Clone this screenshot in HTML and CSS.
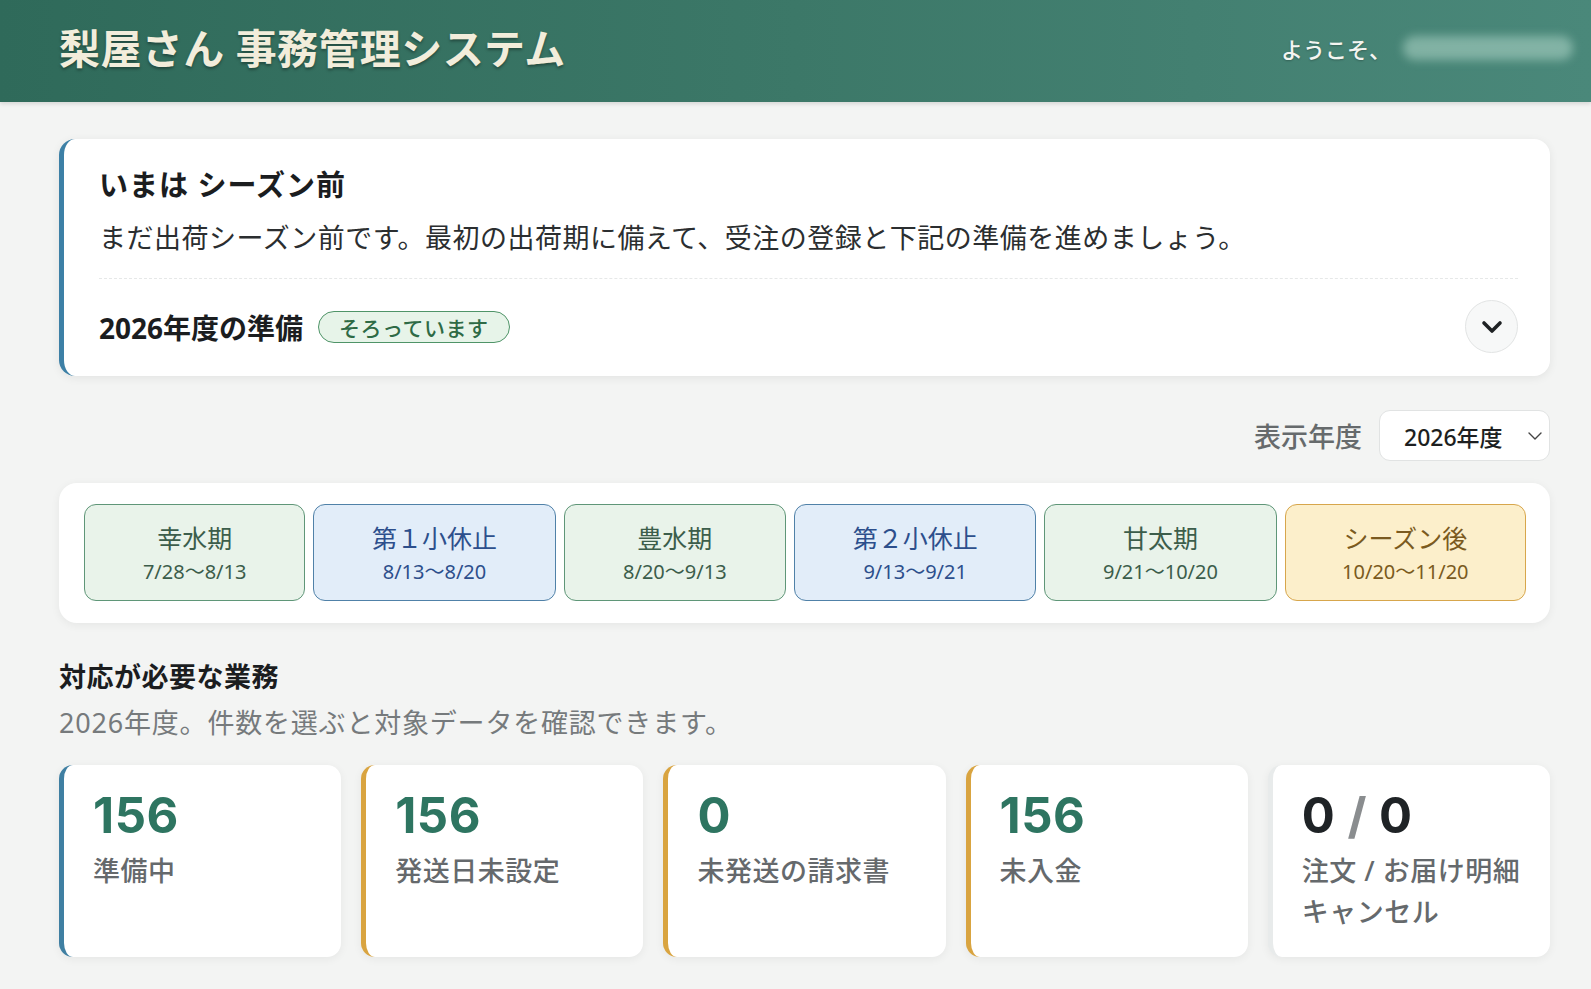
FILE: index.html
```html
<!DOCTYPE html>
<html lang="ja">
<head>
<meta charset="utf-8">
<title>梨屋さん 事務管理システム</title>
<link rel="stylesheet" href="styles.css">
</head>
<body>
<header class="topbar">
  <h1 class="brand">梨屋さん 事務管理システム</h1>
  <div class="welcome">ようこそ、<span class="user-blur"></span></div>
</header>
<main class="page">
  <section class="status-card">
    <h2 class="status-title">いまは シーズン前</h2>
    <p class="status-desc">まだ出荷シーズン前です。最初の出荷期に備えて、受注の登録と下記の準備を進めましょう。</p>
    <div class="status-row">
      <div class="prep">
        <span class="prep-title">2026年度の準備</span>
        <span class="badge">そろっています</span>
      </div>
      <button class="toggle" aria-label="開く">
        <svg width="22" height="14" viewBox="0 0 22 14"><path d="M3 3 L11 11 L19 3" fill="none" stroke="#1f2224" stroke-width="3.6" stroke-linecap="round" stroke-linejoin="round"/></svg>
      </button>
    </div>
  </section>

  <div class="year-picker">
    <span class="year-label">表示年度</span>
    <div class="select">
      <span>2026年度</span>
      <svg width="16" height="10" viewBox="0 0 16 10"><path d="M2 2 L8 8 L14 2" fill="none" stroke="#444" stroke-width="1.4" stroke-linecap="round" stroke-linejoin="round"/></svg>
    </div>
  </div>

  <section class="period-card">
    <div class="chips">
      <div class="chip green"><span class="chip-name">幸水期</span><span class="chip-date">7/28〜8/13</span></div>
      <div class="chip blue"><span class="chip-name">第１小休止</span><span class="chip-date">8/13〜8/20</span></div>
      <div class="chip green"><span class="chip-name">豊水期</span><span class="chip-date">8/20〜9/13</span></div>
      <div class="chip blue"><span class="chip-name">第２小休止</span><span class="chip-date">9/13〜9/21</span></div>
      <div class="chip green"><span class="chip-name">甘太期</span><span class="chip-date">9/21〜10/20</span></div>
      <div class="chip yellow"><span class="chip-name">シーズン後</span><span class="chip-date">10/20〜11/20</span></div>
    </div>
  </section>

  <section class="tasks">
    <h2 class="tasks-title">対応が必要な業務</h2>
    <p class="tasks-sub">2026年度。件数を選ぶと対象データを確認できます。</p>
    <div class="stats">
      <div class="stat stat-blue"><div class="stat-num">156</div><div class="stat-label">準備中</div></div>
      <div class="stat stat-gold"><div class="stat-num">156</div><div class="stat-label">発送日未設定</div></div>
      <div class="stat stat-gold"><div class="stat-num">0</div><div class="stat-label">未発送の請求書</div></div>
      <div class="stat stat-gold"><div class="stat-num">156</div><div class="stat-label">未入金</div></div>
      <div class="stat stat-plain"><div class="stat-num dark">0<span class="slash"> / </span>0</div><div class="stat-label">注文 / お届け明細<br>キャンセル</div></div>
    </div>
  </section>
</main>
</body>
</html>
```

FILE: styles.css
```css
* { box-sizing: border-box; }

html, body {
  margin: 0;
  padding: 0;
}

body {
  background: #f3f4f3;
  font-family: "Noto Sans", "Noto Sans CJK JP", sans-serif;
  color: #1d1f21;
}

.topbar {
  height: 102px;
  display: flex;
  align-items: center;
  justify-content: space-between;
  padding: 0 18px 6px 59px;
  background: linear-gradient(90deg, #2f6a5a 0%, #3c7868 50%, #4a887a 100%);
  box-shadow: 0 2px 4px rgba(0, 0, 0, 0.12);
}

.brand {
  margin: 0;
  font-size: 41px;
  font-weight: 700;
  color: #f2eddb;
  letter-spacing: 0.4px;
  text-shadow: 0 2px 3px rgba(0, 0, 0, 0.35);
  line-height: 1;
}

.welcome {
  display: flex;
  align-items: center;
  font-size: 22px;
  font-weight: 500;
  color: #f4f5f1;
  text-shadow: 0 1px 2px rgba(0, 0, 0, 0.25);
}

.user-blur {
  display: inline-block;
  width: 170px;
  height: 24px;
  margin-left: 12px;
  border-radius: 12px;
  background: rgba(200, 232, 220, 0.45);
  filter: blur(5px);
}

.page {
  padding: 37px 41px 40px 59px;
}

/* status card */
.status-card {
  background: #fff;
  border-left: 5px solid #3d80a6;
  border-radius: 16px;
  padding: 26px 32px 23px 35px;
  box-shadow: 0 2px 10px rgba(0, 0, 0, 0.07);
}

.status-title {
  margin: 0;
  font-size: 29px;
  line-height: 40px;
  font-weight: 700;
  letter-spacing: 1px;
  color: #1b1d1f;
}

.status-desc {
  margin: 13px 0 0;
  font-size: 27px;
  line-height: 40px;
  color: #2b2e30;
  letter-spacing: 0.5px;
}

.status-row {
  margin-top: 20px;
  padding-top: 21px;
  border-top: 1px dashed #e6e8e8;
  display: flex;
  align-items: center;
  justify-content: space-between;
}

.prep {
  display: flex;
  align-items: center;
  gap: 15px;
}

.prep-title {
  font-size: 28px;
  font-weight: 700;
  color: #1b1d1f;
}

.badge {
  display: inline-flex;
  align-items: center;
  height: 32px;
  padding: 0 20px;
  border: 1.5px solid #4f9468;
  border-radius: 16px;
  background: #e7f4e9;
  color: #2e6a45;
  font-size: 21px;
  font-weight: 500;
  letter-spacing: 0.5px;
}

.toggle {
  width: 53px;
  height: 53px;
  border-radius: 50%;
  border: 1px solid #e2e4e4;
  background: #f7f8f8;
  display: flex;
  align-items: center;
  justify-content: center;
  padding: 0;
}

/* year picker */
.year-picker {
  display: flex;
  justify-content: flex-end;
  align-items: center;
  gap: 17px;
  margin-top: 34px;
}

.year-label {
  font-size: 27px;
  font-weight: 500;
  color: #666a6c;
}

.select {
  width: 171px;
  height: 51px;
  display: flex;
  align-items: center;
  justify-content: space-between;
  padding: 0 6px 0 24px;
  background: #fff;
  border: 1px solid #e1e3e3;
  border-radius: 11px;
  font-size: 23px;
  font-weight: 500;
  color: #1d1f21;
}

/* period card */
.period-card {
  margin-top: 22px;
  background: #fff;
  border-radius: 18px;
  padding: 21px 24px 22px 25px;
  box-shadow: 0 2px 10px rgba(0, 0, 0, 0.06);
}

.chips {
  display: grid;
  grid-template-columns: 221fr 242fr 222fr 242fr 232fr 241fr;
  gap: 8px;
}

.chip {
  height: 97px;
  border-radius: 12px;
  border: 1.5px solid;
  display: flex;
  flex-direction: column;
  align-items: center;
  justify-content: center;
  padding-top: 4px;
}

.chip-name {
  font-size: 25px;
  line-height: 34px;
}

.chip-date {
  font-size: 20px;
  line-height: 34px;
}

.chip.green {
  background: #e9f3ea;
  border-color: #5f9678;
  color: #3c5d4b;
}

.chip.blue {
  background: #e2edf9;
  border-color: #5081a8;
  color: #2d4f8c;
}

.chip.yellow {
  background: #fcefcb;
  border-color: #d7a64c;
  color: #7a5a20;
}

/* tasks */
.tasks {
  margin-top: 34px;
}

.tasks-title {
  margin: 0;
  font-size: 27px;
  line-height: 40px;
  font-weight: 700;
  letter-spacing: 0.5px;
  color: #1b1d1f;
}

.tasks-sub {
  margin: 6px 0 0;
  font-size: 27px;
  line-height: 40px;
  color: #767a7c;
  letter-spacing: 0.8px;
}

.stats {
  margin-top: 22px;
  display: grid;
  grid-template-columns: repeat(5, 1fr);
  gap: 20px;
}

.stat {
  height: 192px;
  background: #fff;
  border-radius: 14px;
  border-left: 5px solid #e6e9e9;
  padding: 23px 20px 0 29px;
  box-shadow: 0 2px 10px rgba(0, 0, 0, 0.06);
}

.stat-blue { border-left-color: #3f7fa2; }
.stat-gold { border-left-color: #d9a440; }
.stat-plain { border-left-color: #e8ebeb; }

.stat-num {
  font-family: Inter, "Noto Sans", sans-serif;
  font-size: 49px;
  line-height: 56px;
  font-weight: 700;
  letter-spacing: 0.5px;
  color: #2e7561;
}

.stat-num.dark { color: #1f2326; }

.slash {
  color: #8a8d8f;
}

.stat-label {
  margin-top: 6px;
  font-size: 27px;
  line-height: 41px;
  font-weight: 500;
  letter-spacing: 0.5px;
  color: #65696c;
}
```
